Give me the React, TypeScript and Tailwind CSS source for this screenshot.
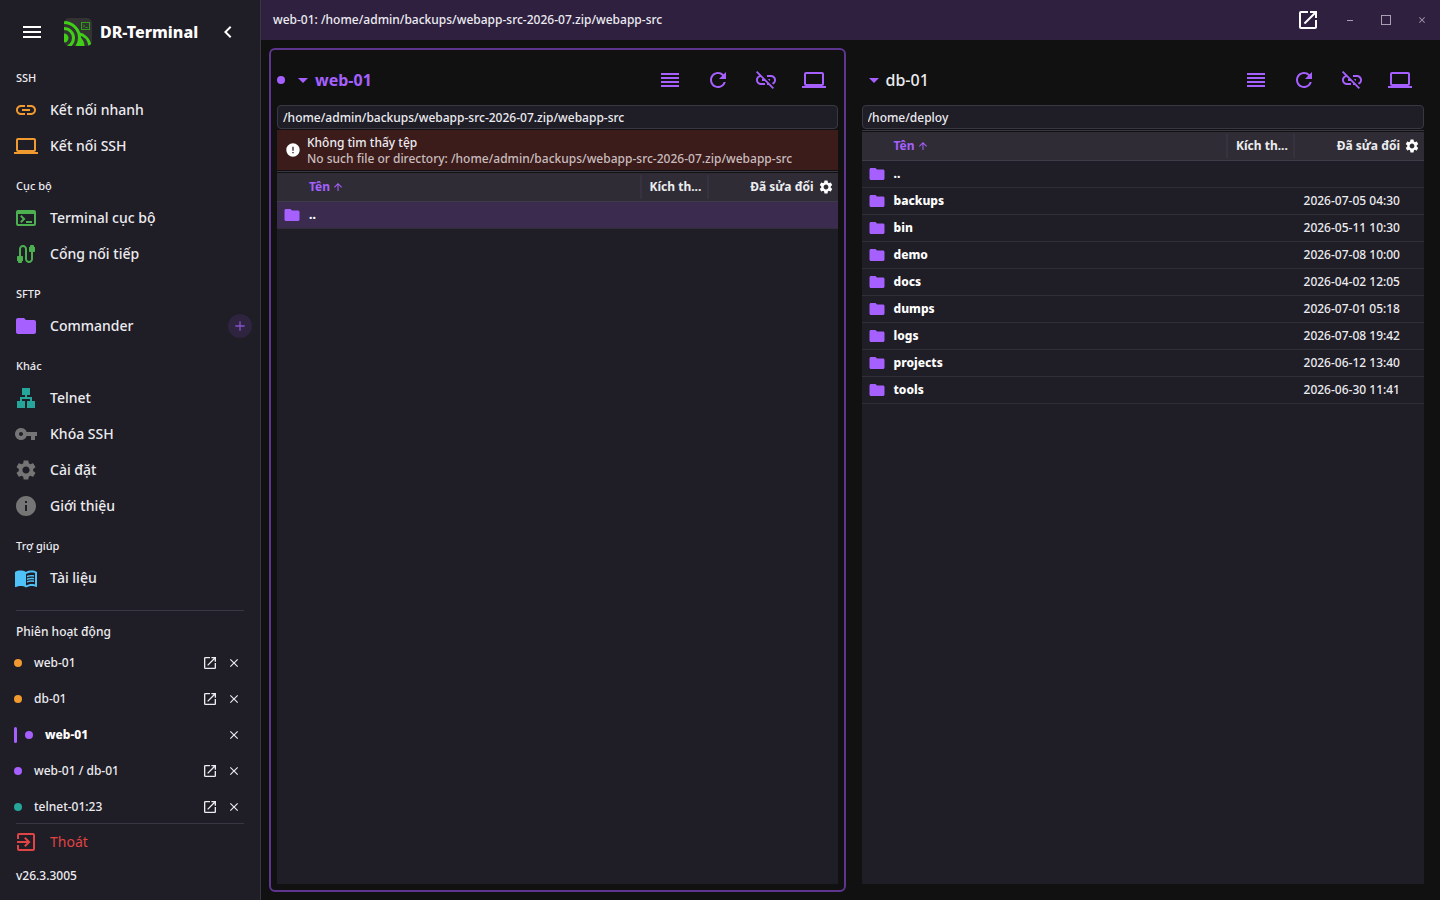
import React from 'react';
import type { IconType } from 'react-icons';
import {
  MdAdd,
  MdArrowDropDown,
  MdArrowUpward,
  MdCable,
  MdChevronLeft,
  MdClose,
  MdError,
  MdExitToApp,
  MdFolder,
  MdInfo,
  MdLan,
  MdLaptop,
  MdLink,
  MdLinkOff,
  MdMenu,
  MdMenuBook,
  MdOpenInNew,
  MdRefresh,
  MdReorder,
  MdSettings,
  MdTerminal,
  MdVpnKey
} from 'react-icons/md';

interface NavItem {
  label: string;
  icon: IconType;
  color: string;
  canAdd?: boolean;
}

interface NavSection {
  title: string;
  items: NavItem[];
}

interface Session {
  name: string;
  dot: string;
  active?: boolean;
}

interface FileRow {
  name: string;
  modified: string;
}

interface PaneProps {
  host: string;
  path: string;
  rows: FileRow[];
  active?: boolean;
  error?: { title: string; detail: string };
}

const sections: NavSection[] = [
  {
    title: 'SSH',
    items: [
      { label: 'Kết nối nhanh', icon: MdLink, color: 'text-[#f09a30]' },
      { label: 'Kết nối SSH', icon: MdLaptop, color: 'text-[#f09a30]' }
    ]
  },
  {
    title: 'Cục bộ',
    items: [
      { label: 'Terminal cục bộ', icon: MdTerminal, color: 'text-[#4caf50]' },
      { label: 'Cổng nối tiếp', icon: MdCable, color: 'text-[#4caf50]' }
    ]
  },
  {
    title: 'SFTP',
    items: [{ label: 'Commander', icon: MdFolder, color: 'text-[#a560ff]', canAdd: true }]
  },
  {
    title: 'Khác',
    items: [
      { label: 'Telnet', icon: MdLan, color: 'text-[#26a69a]' },
      { label: 'Khóa SSH', icon: MdVpnKey, color: 'text-[#757575]' },
      { label: 'Cài đặt', icon: MdSettings, color: 'text-[#757575]' },
      { label: 'Giới thiệu', icon: MdInfo, color: 'text-[#757575]' }
    ]
  },
  {
    title: 'Trợ giúp',
    items: [{ label: 'Tài liệu', icon: MdMenuBook, color: 'text-[#4fc3f7]' }]
  }
];

const sessions: Session[] = [
  { name: 'web-01', dot: 'bg-[#f09a30]' },
  { name: 'db-01', dot: 'bg-[#f09a30]' },
  { name: 'web-01', dot: 'bg-[#a560ff]', active: true },
  { name: 'web-01 / db-01', dot: 'bg-[#a560ff]' },
  { name: 'telnet-01:23', dot: 'bg-[#26a69a]' }
];

const deployRows: FileRow[] = [
  { name: '..', modified: '' },
  { name: 'backups', modified: '2026-07-05 04:30' },
  { name: 'bin', modified: '2026-05-11 10:30' },
  { name: 'demo', modified: '2026-07-08 10:00' },
  { name: 'docs', modified: '2026-04-02 12:05' },
  { name: 'dumps', modified: '2026-07-01 05:18' },
  { name: 'logs', modified: '2026-07-08 19:42' },
  { name: 'projects', modified: '2026-06-12 13:40' },
  { name: 'tools', modified: '2026-06-30 11:41' }
];

const Logo: React.FC = () => (
  <svg className="h-7 w-7 shrink-0" viewBox="0 0 28 28" aria-hidden="true">
    <defs>
      <clipPath id="logo-clip">
        <rect width="28" height="28" rx="5" />
      </clipPath>
    </defs>
    <g clipPath="url(#logo-clip)">
      <rect width="28" height="28" fill="#333333" />
      <g fill="none" stroke="#3fcf17" strokeWidth="3">
        <circle cx="0" cy="20" r="9.5" />
        <circle cx="0" cy="20" r="15.5" />
        <path d="M14 15.5C20 16.5 25 21 26 28" />
      </g>
      <circle cx="0" cy="20" r="4.5" fill="#3fcf17" />
      <path d="M12 28C14 25 15 22 15 18C18 20 20.5 24 20.5 28Z" fill="#3fcf17" />
      <rect x="17.5" y="4.5" width="8" height="7" fill="none" stroke="#2f9e18" />
      <path d="M19 6.5l1.5 1.5L19 9.5M21.5 9.5h2" fill="none" stroke="#2f9e18" />
    </g>
  </svg>
);

const Sidebar: React.FC = () => {
  return (
    <aside className="flex w-[261px] shrink-0 flex-col border-r border-[#3a3745] bg-[#1f1d26]">
      {/* Brand */}
      <div className="flex h-14 shrink-0 items-center pt-2 pr-5 pl-5">
        <button aria-label="Menu">
          <MdMenu className="h-6 w-6 text-white" />
        </button>
        <div className="ml-5 flex flex-1 items-center gap-2">
          <Logo />
          <span className="text-base font-extrabold text-white">DR-Terminal</span>
        </div>
        <button aria-label="Thu gọn">
          <MdChevronLeft className="h-6 w-6 text-white" />
        </button>
      </div>

      {/* Navigation */}
      <nav className="shrink-0">
        {sections.map((section) => (
          <div key={section.title}>
            <h2 className="flex h-9 items-center px-4 pt-2 text-[11px] font-medium">{section.title}</h2>
            {section.items.map(({ label, icon: Icon, color, canAdd }) => (
              <div key={label} className="flex h-9 items-center pr-2">
                <a href="#" className="flex flex-1 items-center gap-3 pl-[14px] text-sm font-medium">
                  <Icon className={`h-6 w-6 ${color}`} />
                  {label}
                </a>
                {canAdd && (
                  <button
                    aria-label="Thêm"
                    className="flex h-6 w-6 items-center justify-center rounded-full bg-[#2f243f] text-[#8450cc]"
                  >
                    <MdAdd className="h-4 w-4" />
                  </button>
                )}
              </div>
            ))}
          </div>
        ))}
      </nav>

      {/* Sessions */}
      <div className="mx-4 mt-[14px] border-t border-[#3a3745]" />
      <h2 className="flex h-[34px] shrink-0 items-center px-4 pt-2 text-xs font-medium">Phiên hoạt động</h2>
      <ul className="min-h-0 flex-1 overflow-hidden">
        {sessions.map((session, i) => (
          <li key={i} className="flex h-9 items-center pr-[14px] pl-[14px] text-xs">
            {session.active && <span className="mr-2 h-4 w-[3px] rounded-sm bg-[#a560ff]" />}
            <span className={`h-2 w-2 rounded-full ${session.dot}`} />
            <a
              href="#"
              className={session.active ? 'ml-3 flex-1 font-extrabold text-white' : 'ml-3 flex-1 font-medium'}
            >
              {session.name}
            </a>
            {!session.active && (
              <button aria-label="Mở cửa sổ mới" className="flex h-6 w-6 items-center justify-center">
                <MdOpenInNew className="h-4 w-4" />
              </button>
            )}
            <button aria-label="Đóng" className="flex h-6 w-6 items-center justify-center">
              <MdClose className="h-[14px] w-[14px]" />
            </button>
          </li>
        ))}
      </ul>

      {/* Exit */}
      <div className="mx-4 shrink-0 border-t border-[#3a3745]" />
      <button className="flex h-9 shrink-0 items-center gap-3 pl-[14px] text-sm text-[#e04444]">
        <MdExitToApp className="h-6 w-6" />
        Thoát
      </button>
      <p className="h-10 shrink-0 px-4 pt-2 text-xs font-medium">v26.3.3005</p>
    </aside>
  );
};

const TitleBar: React.FC = () => {
  return (
    <header className="flex h-10 shrink-0 items-center bg-[#2f2040] pl-3">
      <h1 className="flex-1 text-xs font-medium">web-01: /home/admin/backups/webapp-src-2026-07.zip/webapp-src</h1>
      <button aria-label="Mở cửa sổ mới" className="flex h-10 w-12 items-center justify-center text-white">
        <MdOpenInNew className="h-6 w-6" />
      </button>
      <div className="flex text-[#a79fb2]">
        <button aria-label="Thu nhỏ" className="flex h-10 w-9 items-center justify-center">
          <span className="h-px w-[6px] bg-current" />
        </button>
        <button aria-label="Phóng to" className="flex h-10 w-9 items-center justify-center">
          <span className="h-[10px] w-[10px] border border-current" />
        </button>
        <button aria-label="Đóng" className="flex h-10 w-9 items-center justify-center">
          <MdClose className="h-[10px] w-[10px]" />
        </button>
      </div>
    </header>
  );
};

const tools: { label: string; icon: IconType }[] = [
  { label: 'Danh sách', icon: MdReorder },
  { label: 'Làm mới', icon: MdRefresh },
  { label: 'Ngắt kết nối', icon: MdLinkOff },
  { label: 'Máy cục bộ', icon: MdLaptop }
];

const FilePane: React.FC<PaneProps> = ({ host, path, rows, active, error }) => {
  return (
    <section
      className={`flex min-w-0 flex-col rounded-md border-2 p-[6px] ${
        active ? 'border-[#5e358f]' : 'border-transparent'
      }`}
    >
      {/* Host and tools */}
      <div className="flex h-12 shrink-0 items-center">
        {active && <span className="mr-1 h-2 w-2 rounded-full bg-[#a560ff]" />}
        <button
          className={`flex flex-1 items-center text-base ${active ? 'pl-[2px] font-bold text-[#a560ff]' : 'font-medium'}`}
        >
          <MdArrowDropDown className="h-6 w-6 text-[#a560ff]" />
          {host}
        </button>
        {tools.map(({ label, icon: Icon }) => (
          <button
            key={label}
            aria-label={label}
            className="flex h-12 w-12 items-center justify-center text-[#a560ff]"
          >
            <Icon className="h-6 w-6" />
          </button>
        ))}
      </div>

      <input
        type="text"
        aria-label="Đường dẫn"
        defaultValue={path}
        className="mt-px h-6 shrink-0 rounded border border-[#3a3745] bg-[#1f1d26] px-[5px] text-xs font-medium outline-none"
      />

      {error && (
        <div role="alert" className="mt-px flex h-10 shrink-0 items-center gap-[6px] bg-[#3c1b1b] pl-2 text-xs">
          <MdError className="h-4 w-4 shrink-0 text-white" />
          <div className="pt-[2px] font-medium">
            <p>{error.title}</p>
            <p className="truncate text-[#c8bdbd]">{error.detail}</p>
          </div>
        </div>
      )}

      {/* Files */}
      <div className="mt-px mb-px border-t border-[#3a3745]" />
      <div className="min-h-0 flex-1 bg-[#1f1d26]">
        <table className="w-full table-fixed border-separate border-spacing-0">
          <thead>
            <tr className="h-[29px] bg-[#2f2c36] text-xs">
              <th className="border-b border-[#3f3c49] py-0 pr-0 pl-8 text-left font-bold text-[#a560ff]">
                <span className="flex items-center gap-[2px]">
                  Tên
                  <MdArrowUpward className="h-3 w-3" />
                </span>
              </th>
              <th className="w-[67px] border-b border-[#3f3c49] p-0 font-bold">
                <span className="flex h-6 items-center border-l-2 border-[#36323f] pl-2 whitespace-nowrap">Kích th...</span>
              </th>
              <th className="w-[131px] border-b border-[#3f3c49] p-0 font-bold">
                <span className="flex h-6 items-center justify-end gap-1 border-l-2 border-[#36323f] pr-1">
                  Đã sửa đổi
                  <button aria-label="Cột">
                    <MdSettings className="h-4 w-4 text-white" />
                  </button>
                </span>
              </th>
            </tr>
          </thead>
          <tbody>
            {rows.map((row) => (
              <tr key={row.name} className={`h-[27px] text-xs ${active ? 'bg-[#3a2b4f]' : ''}`}>
                <td className="border-b border-[#312e3a] p-0 font-extrabold text-white">
                  <span className="flex items-center gap-2 pl-[6px]">
                    <MdFolder className="h-[18px] w-[18px] text-[#a560ff]" />
                    {row.name}
                  </span>
                </td>
                <td className="border-b border-[#312e3a] p-0" />
                <td className="border-b border-[#312e3a] py-0 pr-6 pl-0 text-right font-medium">{row.modified}</td>
              </tr>
            ))}
          </tbody>
        </table>
      </div>
    </section>
  );
};

const App: React.FC = () => {
  return (
    <div className="flex h-screen overflow-hidden bg-[#111111] font-['Noto_Sans',sans-serif] text-[#ececf0]">
      <Sidebar />
      <div className="flex min-w-0 flex-1 flex-col">
        <TitleBar />
        <main className="grid min-h-0 flex-1 grid-cols-[calc(50%-5px)_1fr] gap-2 p-2">
          <FilePane
            active
            host="web-01"
            path="/home/admin/backups/webapp-src-2026-07.zip/webapp-src"
            rows={[{ name: '..', modified: '' }]}
            error={{
              title: 'Không tìm thấy tệp',
              detail: 'No such file or directory: /home/admin/backups/webapp-src-2026-07.zip/webapp-src'
            }}
          />
          <FilePane host="db-01" path="/home/deploy" rows={deployRows} />
        </main>
      </div>
    </div>
  );
};

export default App;
